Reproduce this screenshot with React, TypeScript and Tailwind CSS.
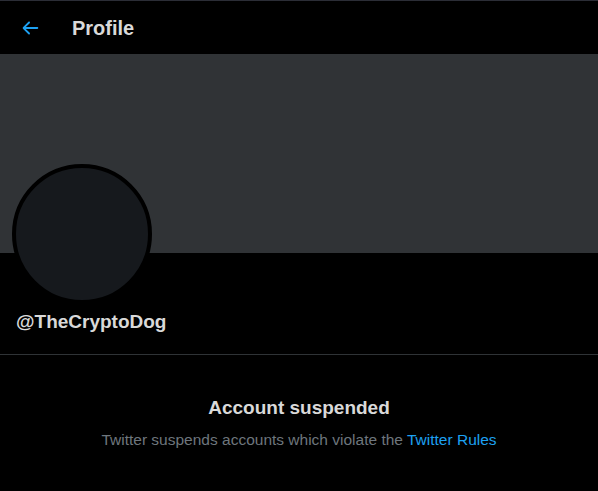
import React from "react";

function BackArrow() {
  return (
    <svg viewBox="0 0 24 24" className="h-[22px] w-[22px] fill-[#1da1f2]">
      <path d="M20 11H7.414l4.293-4.293c.39-.39.39-1.023 0-1.414s-1.023-.39-1.414 0l-6 6c-.39.39-.39 1.023 0 1.414l6 6c.195.195.45.293.707.293s.512-.098.707-.293c.39-.39.39-1.023 0-1.414L7.414 13H20c.553 0 1-.447 1-1s-.447-1-1-1z" />
    </svg>
  );
}

export default function App() {
  return (
    <div className="h-[491px] w-[598px] overflow-hidden border-t border-[#2b2d36] bg-black font-['Liberation_Sans',Arial,sans-serif] text-[#d9d9d9]">
      <header className="flex h-[53px] items-center">
        <div className="ml-[19px] flex h-[22px] w-[22px] items-center">
          <BackArrow />
        </div>
        <h1 className="ml-[31px] mt-[1px] text-[20px] font-bold leading-none">Profile</h1>
      </header>

      <div className="h-[199px] bg-[#303336]" />

      <div className="px-[12px]">
        <div className="-mt-[89px] h-[140px] w-[140px] rounded-full border-4 border-black bg-[#16191d]" />
        <div className="ml-[4px] mt-[6px] text-[19px] font-bold leading-[23px]">@TheCryptoDog</div>
      </div>

      <div className="mt-[21px] h-px bg-[#2f3336]" />

      <section className="flex flex-col items-center pt-[41px]">
        <h2 className="text-[19px] font-bold leading-[23px]">Account suspended</h2>
        <p className="mt-[11px] text-[15.5px] leading-[20px] text-[#6e767d]">
          Twitter suspends accounts which violate the{" "}
          <a className="text-[#1da1f2]" href="#">
            Twitter Rules
          </a>
        </p>
      </section>
    </div>
  );
}
